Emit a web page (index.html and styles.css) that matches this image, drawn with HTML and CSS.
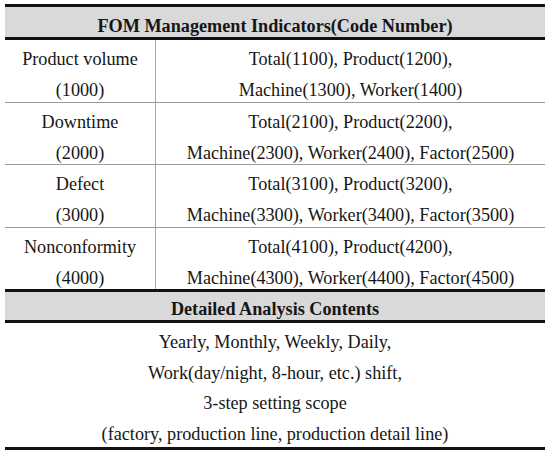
FILE: index.html
```html
<!DOCTYPE html>
<html lang="en">
<head>
    <meta charset="UTF-8">
    <meta name="viewport" content="width=device-width, initial-scale=1.0">
    <title>FOM Management Indicators</title>
    <link rel="stylesheet" href="styles.css">
</head>
<body>
    <div class="fom-table">
        <div class="head">FOM Management Indicators(Code Number)</div>
        <div class="rows">
            <div class="name">Product volume<br>(1000)</div>
            <div class="codes">Total(1100), Product(1200),<br>Machine(1300), Worker(1400)</div>
            <div class="name">Downtime<br>(2000)</div>
            <div class="codes">Total(2100), Product(2200),<br>Machine(2300), Worker(2400), Factor(2500)</div>
            <div class="name">Defect<br>(3000)</div>
            <div class="codes">Total(3100), Product(3200),<br>Machine(3300), Worker(3400), Factor(3500)</div>
            <div class="name last">Nonconformity<br>(4000)</div>
            <div class="codes last">Total(4100), Product(4200),<br>Machine(4300), Worker(4400), Factor(4500)</div>
        </div>
        <div class="head head-2">Detailed Analysis Contents</div>
        <div class="contents">
            Yearly, Monthly, Weekly, Daily,<br>
            Work(day/night, 8-hour, etc.) shift,<br>
            3-step setting scope<br>
            (factory, production line, production detail line)
        </div>
    </div>
</body>
</html>
```

FILE: styles.css
```css
body { margin: 0; background: #fff; font-family: "Liberation Serif", "Times New Roman", serif; font-size: 18.2px; color: #161616; }
.fom-table { width: 540px; margin: 4px 0 0 5px; border-top: 3px solid #111; border-bottom: 3px solid #111; }
.head { background: #d9d9d9; border-bottom: 3px solid #111; text-align: center; font-weight: bold; padding-top: 8px; line-height: 22px; }
.head-2 { border-top: 3px solid #111; padding-top: 7px; line-height: 21px; }
.rows { display: grid; grid-template-columns: 151px 1fr; }
.name, .codes { box-sizing: border-box; height: 62.5px; padding-top: 4px; line-height: 31px; text-align: center; border-bottom: 1px solid #9a9a9a; white-space: nowrap; }
.name { border-right: 1px solid #a8a8a8; }
.last { border-bottom: none; height: 61.5px; }
.contents { box-sizing: border-box; height: 124px; text-align: center; padding-top: 4px; line-height: 30.5px; }
```
